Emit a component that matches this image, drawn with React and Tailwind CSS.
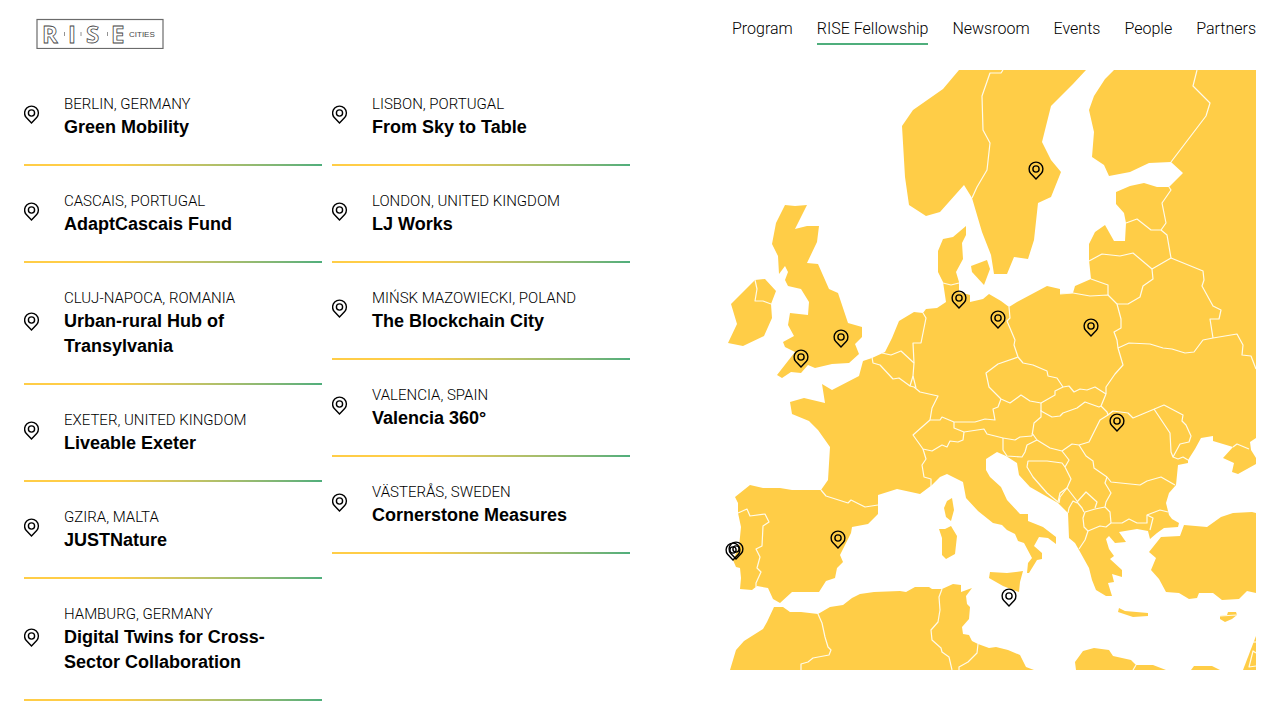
import React from 'react';

const navItems = ['Program', 'RISE Fellowship', 'Newsroom', 'Events', 'People', 'Partners'];

const leftProjects = [
  { place: 'Berlin, Germany', title: 'Green Mobility' },
  { place: 'Cascais, Portugal', title: 'AdaptCascais Fund' },
  { place: 'Cluj-Napoca, Romania', title: 'Urban-rural Hub of Transylvania' },
  { place: 'Exeter, United Kingdom', title: 'Liveable Exeter' },
  { place: 'Gzira, Malta', title: 'JUSTNature' },
  { place: 'Hamburg, Germany', title: 'Digital Twins for Cross-Sector Collaboration' },
];

const rightProjects = [
  { place: 'Lisbon, Portugal', title: 'From Sky to Table' },
  { place: 'London, United Kingdom', title: 'LJ Works' },
  { place: 'Mińsk Mazowiecki, Poland', title: 'The Blockchain City' },
  { place: 'Valencia, Spain', title: 'Valencia 360°' },
  { place: 'Västerås, Sweden', title: 'Cornerstone Measures' },
];

// Land masses, clockwise
const land = [
  // Norway and Sweden
  '959,70 943,89 913,110 902,126 905,177 909,205 926,216 940,212 964,185 972,198 982,232 991,255 994,274 1007,274 1014,257 1028,259 1034,240 1038,203 1051,197 1061,172 1051,160 1042,142 1051,106 1073,84 1086,70',
  // Continent
  '966,226 966,235 962,243 963,259 956,272 959,282 959,292 970,295 970,302 983,299 989,294 1001,301 1009,307 1017,302 1047,286 1060,289 1060,294 1073,293 1075,286 1091,279 1089,260 1089,244 1095,232 1105,225 1114,241 1125,241 1126,223 1124,213 1116,204 1116,192 1130,186 1144,183 1157,187 1169,187 1183,173 1171,162 1149,163 1130,172 1109,176 1104,165 1092,157 1094,132 1089,110 1094,96 1105,79 1114,70 1256,70 1256,438 1250,442 1251,450 1256,458 1256,464 1238,474 1232,472 1234,463 1223,458 1233,447 1213,441 1213,436 1201,438 1195,449 1188,460 1188,463 1178,465 1176,485 1169,493 1166,503 1169,515 1172,519 1179,523 1178,527 1164,528 1157,533 1150,539 1148,531 1137,529 1119,532 1126,542 1115,543 1109,536 1106,539 1109,549 1114,556 1110,559 1122,570 1122,577 1112,574 1114,582 1108,583 1112,596 1106,596 1096,590 1092,580 1089,568 1079,550 1075,543 1069,538 1068,513 1058,503 1030,487 1019,475 1017,463 1006,456 997,452 986,459 986,470 990,477 1001,487 1007,500 1020,514 1028,514 1028,521 1043,527 1056,537 1056,544 1048,538 1039,537 1034,546 1042,553 1042,559 1037,560 1029,573 1027,573 1028,563 1032,558 1024,543 1018,541 1015,534 1007,530 1002,525 993,523 978,511 966,498 963,482 947,474 940,477 932,485 920,494 897,489 878,495 878,514 868,524 852,527 851,533 840,555 843,562 837,568 835,578 826,581 819,592 792,592 780,603 773,599 768,588 757,586 752,590 740,589 741,578 740,568 736,567 733,560 739,547 741,527 738,513 738,503 735,497 750,485 763,488 780,488 792,490 821,490 828,480 830,447 818,430 809,421 792,414 790,402 804,398 825,403 822,384 832,390 859,376 863,361 872,358 885,352 892,338 899,321 914,312 923,313 926,309 937,308 946,302 943,282 938,272 938,251 943,239 953,237',
  // Great Britain
  '785,205 795,206 807,205 795,229 807,226 819,226 817,242 807,263 818,264 829,289 838,293 848,323 862,327 862,337 855,344 859,354 849,363 832,364 815,368 808,365 801,373 791,372 782,378 777,375 795,352 785,347 783,342 794,336 788,325 790,313 808,315 809,302 801,289 788,286 785,280 788,272 785,266 779,274 778,256 772,244 776,223',
  // Ireland
  '755,280 765,279 776,291 771,304 772,318 764,336 743,346 728,343 737,324 731,304',
  // Zealand
  '971,266 987,260 990,269 984,285 972,272',
  // Sicily, Corsica, Sardinia
  '990,572 1007,573 1023,571 1020,582 1019,592 1003,586 989,578',
  '952,498 954,510 951,521 946,517 944,508 947,501',
  '951,526 957,536 955,554 946,559 942,555 942,538 939,529 945,529',
  // Crete and Cyprus
  '1119,608 1125,611 1148,613 1148,616 1133,617 1118,612',
  '1228,612 1236,612 1237,615 1232,619 1225,622 1220,619 1220,616 1227,615',
  // Turkey
  '1256,513 1252,512 1233,513 1221,517 1207,527 1184,525 1180,536 1161,537 1149,552 1156,558 1151,570 1159,579 1166,592 1179,593 1189,599 1197,598 1199,593 1213,593 1222,600 1239,599 1247,591 1256,593',
  // North Africa
  '730,670 736,650 744,641 763,629 767,622 774,607 783,607 790,612 801,612 818,614 830,607 843,605 852,598 860,594 874,592 900,591 906,592 915,587 929,587 932,589 942,589 953,584 961,585 961,592 972,588 966,596 967,604 970,607 969,619 962,627 963,634 969,635 972,641 978,644 989,648 996,647 1008,650 1020,655 1026,667 1034,670',
  '1076,670 1075,662 1083,651 1094,648 1109,650 1113,656 1131,660 1136,665 1153,665 1166,670',
  '1191,670 1194,666 1206,666 1212,666 1220,670',
  '1256,636 1256,670 1243,670',
];

const borders = [
  '1003,70 1001,73 990,73 982,96 983,130 990,143 987,170 977,187 972,198',
  '1197,70 1193,86 1210,103 1206,116 1171,162',
  '1169,187 1171,190 1162,203 1166,223 1161,230 1151,230 1137,219 1126,223',
  '1161,230 1167,235 1171,258 1152,269 1133,253 1120,256 1102,254 1089,261',
  '1171,258 1203,271 1204,280 1202,286 1213,306 1221,310 1219,319 1210,319 1213,338',
  '1213,338 1237,334 1243,345 1242,355 1251,356 1256,369',
  '1213,338 1203,340 1194,352 1185,353 1172,349 1163,348 1150,344 1129,343 1118,348',
  '1152,269 1153,279 1143,286 1140,297 1128,304 1117,304',
  '1073,293 1090,296 1108,295 1117,304 1121,319 1121,328 1114,332 1117,340 1118,348 1123,365 1115,374 1106,387 1106,394',
  '1060,294 1073,293',
  '1091,279 1108,285 1108,295',
  '1106,394 1095,387 1087,390 1080,389 1074,392 1069,386 1063,387 1057,378 1048,376 1047,371 1033,365 1023,363 1018,357',
  '1009,307 1010,318 1007,321 1015,340 1014,345 1018,357',
  '1018,357 998,364 986,373 989,387 1001,399 1010,403 1021,395 1030,401 1041,403 1055,395 1055,391 1063,387',
  '1041,403 1041,411 1052,417 1060,416 1063,413 1077,408 1085,402 1099,407 1101,406 1106,394',
  '1101,406 1107,412 1108,415 1113,411 1128,413 1133,418 1164,405 1183,415 1182,421 1186,425 1191,436 1189,442 1180,444 1173,457',
  '1154,409 1170,433 1171,452 1173,457 1178,459 1183,457 1188,460',
  '1108,415 1100,420 1089,442 1079,445 1072,444 1062,451',
  '1079,445 1086,456 1093,461 1094,468 1107,477 1111,482 1140,485 1147,481 1161,477 1175,485',
  '1107,477 1105,483 1111,493 1106,502 1105,507 1110,512 1111,523 1122,523 1129,519 1137,523 1147,523 1147,515 1160,510 1168,512',
  '1147,515 1153,518 1150,530',
  '1105,507 1095,509 1085,512 1083,518 1084,527 1088,531 1100,526 1106,527 1111,523',
  '1095,508 1097,502 1086,492 1077,502 1082,508 1084,512',
  '1077,503 1073,501 1069,508 1068,513',
  '1088,531 1085,540 1079,549',
  '1077,501 1067,488 1060,497 1059,503',
  '1067,488 1071,479 1065,467 1069,460 1062,451',
  '1065,467 1062,463 1047,461 1028,461 1027,467 1033,477 1047,493 1058,502 1060,493 1067,488',
  '1032,433 1037,440 1050,448 1062,451',
  '1003,438 1015,440 1020,437 1032,436',
  '1037,440 1027,445 1025,452 1022,457 1007,456 1003,450 1003,438',
  '1032,436 1034,423 1041,417 1041,410',
  '1001,399 998,407 993,409 995,420 985,419 975,422 954,422 942,417 940,420 930,420',
  '954,422 954,428 964,432 984,429 987,434 1003,438',
  '930,420 922,427 913,435 923,449 932,451 942,445 947,447 950,441 958,442 963,440 964,432',
  '923,449 926,459 922,465 924,477 931,479 931,486',
  '930,420 932,408 938,396 920,392 914,387 910,386 899,378 893,379 880,365 873,363 872,357',
  '882,353 891,355 901,351 914,363',
  '923,313 926,318 921,343 913,343 914,363 913,376 910,386',
  '913,376 916,388',
  '943,283 951,285 959,283',
  '821,490 826,496 848,503 851,500 865,507 878,505',
  '738,513 747,509 750,516 765,514 769,522 763,526 762,546 756,549 760,557 757,568 761,572 756,583 756,587',
  '755,280 757,289 755,301 763,301 771,304',
  '1233,447 1237,444 1249,449',
  '1220,616 1237,615',
  '818,614 822,623 825,637 828,647 831,650 829,655 813,658 808,662 801,664 801,670',
  '942,589 939,597 940,610 938,622 931,630 932,640 941,648 942,652 949,657 952,670',
  '978,644 977,653 968,662 959,667 959,670',
  '1136,665 1133,670',
  '1256,642 1253,642',
  '1256,653 1253,651 1249,667 1256,666',
];

const pins = [
  { city: 'Västerås', x: 1036, y: 169 },
  { city: 'Hamburg', x: 959, y: 298 },
  { city: 'Berlin', x: 998, y: 318 },
  { city: 'Mińsk Mazowiecki', x: 1091, y: 326 },
  { city: 'London', x: 841, y: 337 },
  { city: 'Exeter', x: 801, y: 357 },
  { city: 'Cluj-Napoca', x: 1117, y: 421 },
  { city: 'Valencia', x: 838, y: 538 },
  { city: 'Cascais', x: 733, y: 550 },
  { city: 'Lisbon', x: 736, y: 549 },
  { city: 'Gzira', x: 1009, y: 596 },
];

const PinShape = () => (
  <g fill="none" stroke="#000" strokeWidth="1.4">
    <path d="M0 10 L-5.2 4.600 A6.9 6.9 0 1 1 5.2 4.600 Z" />
    <circle r="3.1" />
  </g>
);

const Logo = () => (
  <svg viewBox="0 0 128 32" className="w-32 h-8" role="img" aria-label="RISE Cities">
    <rect x="1" y="2.5" width="126" height="29" fill="none" stroke="#6b6b6b" strokeWidth="1.2" />
    <g fill="none" stroke="#444" strokeWidth="0.8" fontFamily="'Open Sans', sans-serif" fontWeight="700" fontSize="24">
      <text x="6" y="26">R</text>
      <text x="32" y="26">I</text>
      <text x="50" y="26">S</text>
      <text x="75" y="26">E</text>
    </g>
    <path d="M28.5 15v4M45 15v4M71.5 15v4" stroke="#777" strokeWidth="0.8" />
    <text x="93" y="20" fill="#444" fontFamily="'Liberation Sans', sans-serif" fontSize="8">CITIES</text>
  </svg>
);

const Header = () => (
  <header className="flex items-start justify-between pl-9 pr-6 pt-[17px] pb-5">
    <a href="#home">
      <Logo />
    </a>
    <nav className="flex gap-6 text-base font-light">
      {navItems.map((item) => (
        <a
          key={item}
          href="#nav"
          className={
            item === 'RISE Fellowship'
              ? 'pb-0.5 border-b-2 border-[#4fae7c]'
              : 'pb-0.5 border-b-2 border-transparent'
          }
        >
          {item}
        </a>
      ))}
    </nav>
  </header>
);

const ProjectItem = ({ place, title }) => (
  <li>
    <a href="#project" className="flex items-center gap-6 pt-[25px] pb-6 pr-8">
      <svg viewBox="-7.500 -8 16 24" className="w-4 h-6 flex-shrink-0" aria-hidden="true">
        <PinShape />
      </svg>
      <div className="flex-1">
        <p className="text-[15px] leading-[21px] font-light uppercase">{place}</p>
        <h3 className="font-['Liberation_Sans',sans-serif] text-lg leading-[25px] font-bold">{title}</h3>
      </div>
    </a>
    <div className="h-0.5 bg-linear-to-r from-[#ffcd47] from-30% to-[#4fae7c]" />
  </li>
);

const EuropeMap = () => (
  <svg viewBox="650 70 606 600" className="w-full h-auto" role="img" aria-label="Map of projects in Europe">
    <g fill="#ffcd47">
      {land.map((points) => (
        <polygon key={points} points={points} />
      ))}
    </g>
    <g fill="none" stroke="#fffbea" strokeWidth="1.2" strokeLinejoin="round">
      {borders.map((points) => (
        <polyline key={points} points={points} />
      ))}
    </g>
    {pins.map(({ city, x, y }) => (
      <g key={city} transform={`translate(${x} ${y})`}>
        <PinShape />
      </g>
    ))}
  </svg>
);

export default function App() {
  return (
    <div className="bg-white text-black font-[Roboto,sans-serif]">
      <Header />
      <main className="grid grid-cols-2 gap-5 px-6 items-start">
        <div className="grid grid-cols-2 gap-2.5 items-start">
          <ul>
            {leftProjects.map((p) => (
              <ProjectItem key={p.title} {...p} />
            ))}
          </ul>
          <ul>
            {rightProjects.map((p) => (
              <ProjectItem key={p.title} {...p} />
            ))}
          </ul>
        </div>
        <div className="pt-px">
          <EuropeMap />
        </div>
      </main>
    </div>
  );
}
